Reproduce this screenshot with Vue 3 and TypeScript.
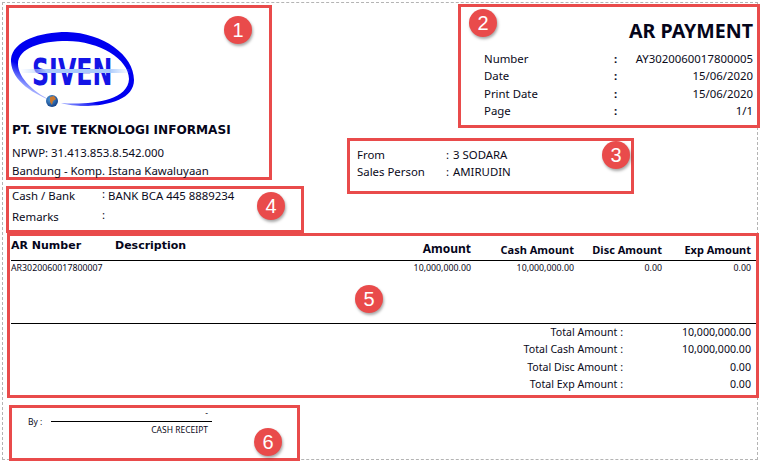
<template>
  <div class="sheet">
    <div class="top">
      <div class="left-col">
        <section class="box company">
          <svg class="logo" width="125" height="80" viewBox="0 0 125 80">
            <defs>
              <linearGradient id="ring" gradientUnits="userSpaceOnUse" x1="50" y1="53" x2="38" y2="77">
                <stop offset="0" stop-color="#0000f0" />
                <stop offset="0.55" stop-color="#7f8cff" />
                <stop offset="1" stop-color="#ffffff" />
              </linearGradient>
              <linearGradient id="shine" x1="0" y1="0" x2="1" y2="0">
                <stop offset="0" stop-color="#b8d4ff" stop-opacity="0" />
                <stop offset="0.25" stop-color="#a9c9fb" />
                <stop offset="0.8" stop-color="#a9c9fb" />
                <stop offset="1" stop-color="#b8d4ff" stop-opacity="0" />
              </linearGradient>
              <radialGradient id="globe" cx="0.4" cy="0.35" r="0.7">
                <stop offset="0" stop-color="#4fa0e0" />
                <stop offset="1" stop-color="#123a80" />
              </radialGradient>
            </defs>
            <path
              fill="url(#ring)"
              fill-rule="evenodd"
              d="M0 27C2 9 28 0 56 0C92 1 123 23 123 48C123 66 100 74 72 74C66 74 56 73 50 71C72 73 117 71 118 47C118 27 88 9 56 9C30 9 7 16 7 32C7 46 24 62 44 70C22 62 -1 48 0 27Z"
            />
            <text class="logo-text" transform="translate(21 53) scale(0.625 1)">SIVEN</text>
            <rect x="9" y="37" width="111" height="4" fill="url(#shine)" />
            <circle cx="41" cy="69" r="6" fill="url(#globe)" />
            <path d="M39 65l4-1 2 3-3 2-1 4-2-3z" fill="#c9772f" />
          </svg>
          <div class="company-name">PT. SIVE TEKNOLOGI INFORMASI</div>
          <div class="company-line npwp">NPWP: 31.413.853.8.542.000</div>
          <div class="company-line">Bandung - Komp. Istana Kawaluyaan</div>
          <span class="badge badge-1">1</span>
        </section>

        <section class="box bank">
          <div class="bank-row">
            <span class="bank-label">Cash / Bank</span><span class="bank-colon">:</span><span>BANK BCA 445 8889234</span>
          </div>
          <div class="bank-row">
            <span class="bank-label">Remarks</span><span class="bank-colon">:</span>
          </div>
          <span class="badge badge-4">4</span>
        </section>
      </div>

      <div class="right-col">
        <section class="box doc">
          <h1>AR PAYMENT</h1>
          <div v-for="row in docRows" :key="row.label" class="doc-row">
            <span>{{ row.label }}</span><span class="doc-colon">:</span><span class="doc-value">{{ row.value }}</span>
          </div>
          <span class="badge badge-2">2</span>
        </section>

        <section class="box party">
          <div v-for="row in partyRows" :key="row.label" class="party-row">
            <span>{{ row.label }}</span><span>:</span><span>{{ row.value }}</span>
          </div>
          <span class="badge badge-3">3</span>
        </section>
      </div>
    </div>

    <section class="box lines">
      <div class="grid-row head">
        <span class="head-no">AR Number</span>
        <span class="head-desc">Description</span>
        <span class="num amount-head">Amount</span>
        <span class="num">Cash Amount</span>
        <span class="num">Disc Amount</span>
        <span class="num">Exp Amount</span>
      </div>
      <div class="grid-row item">
        <span>AR3020060017800007</span>
        <span></span>
        <span class="num">10,000,000.00</span>
        <span class="num">10,000,000.00</span>
        <span class="num">0.00</span>
        <span class="num">0.00</span>
      </div>
      <div class="totals">
        <div v-for="row in totals" :key="row.label" class="total-row">
          <span class="total-label">{{ row.label }} :</span>
          <span class="total-value">{{ row.value }}</span>
        </div>
      </div>
      <span class="badge badge-5">5</span>
    </section>

    <section class="box sign">
      <span class="by">By :</span>
      <div class="sign-block">
        <div class="sign-name">-</div>
        <div class="sign-title">CASH RECEIPT</div>
      </div>
      <span class="badge badge-6">6</span>
    </section>
  </div>
</template>

<script setup lang="ts">
const docRows = [
  { label: 'Number', value: 'AY3020060017800005' },
  { label: 'Date', value: '15/06/2020' },
  { label: 'Print Date', value: '15/06/2020' },
  { label: 'Page', value: '1/1' }
]

const partyRows = [
  { label: 'From', value: '3 SODARA' },
  { label: 'Sales Person', value: 'AMIRUDIN' }
]

const totals = [
  { label: 'Total Amount', value: '10,000,000.00' },
  { label: 'Total Cash Amount', value: '10,000,000.00' },
  { label: 'Total Disc Amount', value: '0.00' },
  { label: 'Total Exp Amount', value: '0.00' }
]
</script>

<style>
html,
body {
  margin: 0;
  background: #fff;
}
</style>

<style scoped>
.sheet {
  position: relative;
  width: 760px;
  height: 461px;
  overflow: hidden;
  box-sizing: border-box;
  padding: 4px 0 0 6px;
  background: #fff;
  color: #0a0a1a;
  font-family: "Noto Sans", "Open Sans", sans-serif;
  font-size: 11.4px;
}

/* dashed page edge of the print preview */
.sheet::before {
  content: "";
  position: absolute;
  left: 2px;
  top: 2px;
  width: 754px;
  height: 456px;
  border: 1px dashed #b4b4b4;
}

.top {
  position: relative;
  display: flex;
}

.left-col {
  width: 298px;
  flex: none;
  padding-top: 1px;
}

.right-col {
  flex: 1;
  display: flex;
  flex-direction: column;
}

.box {
  position: relative;
  box-sizing: border-box;
  border: 3px solid #e94b4b;
}

.company {
  width: 266px;
  height: 175px;
  padding: 24px 0 0 2px;
}

.logo {
  display: block;
}

.logo-text {
  font-family: "DejaVu Sans", sans-serif;
  font-weight: 700;
  font-size: 38px;
  fill: #1414e6;
}

.company-name {
  margin: 11px 0 0 1px;
  font-family: "DejaVu Sans", sans-serif;
  font-weight: 700;
  font-size: 12.1px;
  line-height: 14px;
  color: #05051a;
}

.company-line {
  margin-left: 1px;
  line-height: 18px;
}

.npwp {
  margin-top: 7px;
}

.bank {
  width: 298px;
  height: 47px;
  margin-top: 6px;
  padding: 0 0 0 3px;
}

.bank-row {
  display: flex;
  height: 21px;
  line-height: 13px;
}

.bank-label {
  width: 90px;
}

.bank-colon {
  width: 6px;
  margin-top: -2px;
}

.doc {
  align-self: flex-end;
  width: 302px;
  height: 124px;
  padding: 11px 4px 0 23px;
}

h1 {
  margin: 0 0 7px;
  text-align: right;
  font-size: 19.6px;
  line-height: 25px;
  font-weight: 700;
  color: #05051a;
}

.doc-row {
  display: grid;
  grid-template-columns: 130px 10px 1fr;
  height: 17.3px;
  line-height: 17px;
}

.doc-colon {
  font-weight: 700;
}

.doc-value {
  text-align: right;
}

.party {
  width: 287px;
  height: 56px;
  margin: 10px 0 0 43px;
  padding: 5px 0 0 7px;
}

.party-row {
  display: grid;
  grid-template-columns: 89px 7px 1fr;
  height: 17px;
  line-height: 17px;
}

.lines {
  width: 752px;
  height: 165px;
  margin: 0 0 0 1px;
  padding: 0 0 0 1px;
}

.grid-row {
  display: grid;
  grid-template-columns: 104px 1fr 130px 103px 88px 89px;
  padding-right: 5px;
}

.num {
  text-align: right;
}

.head {
  height: 24px;
  border-bottom: 1px solid #000;
  font-weight: 700;
  font-size: 11px;
  color: #05051a;
  line-height: 23px;
  align-items: start;
}

.head .num {
  padding-top: 2px;
}

.head-no,
.head-desc {
  font-family: "DejaVu Sans", sans-serif;
  font-size: 11px;
  line-height: 19px;
}

.head .amount-head {
  font-size: 12px;
  padding-top: 1px;
}

.item {
  height: 62px;
  border-bottom: 1px solid #000;
  font-size: 8.8px;
  line-height: 15px;
}

.totals {
  padding-top: 1px;
  font-size: 10.6px;
}

.total-row {
  display: grid;
  grid-template-columns: 612px 1fr;
  padding-right: 5px;
  height: 17.3px;
  line-height: 15px;
}

.total-label,
.total-value {
  text-align: right;
}

.sign {
  display: flex;
  width: 291px;
  height: 56px;
  margin: 7px 0 0 3px;
  padding-left: 16px;
  font-size: 8.5px;
}

.by {
  width: 23px;
  margin-top: 8px;
  line-height: 12px;
}

.sign-block {
  width: 161px;
}

.sign-name {
  height: 13px;
  border-bottom: 1px solid #000;
  text-align: right;
  padding-right: 4px;
  line-height: 10px;
}

.sign-title {
  text-align: right;
  padding-right: 4px;
  line-height: 15px;
}

.badge {
  position: absolute;
  width: 28px;
  height: 28px;
  border-radius: 50%;
  background: #e94b4b;
  color: #fff;
  font-family: "Liberation Sans", sans-serif;
  font-size: 20px;
  line-height: 28px;
  text-align: center;
  box-shadow: 1px 2px 3px rgba(0, 0, 0, 0.35);
}

.badge-1 { left: 215px; top: 8px; }
.badge-2 { left: 8px; top: 2px; }
.badge-3 { left: 252px; top: 0px; }
.badge-4 { left: 248px; top: 3px; }
.badge-5 { left: 345px; top: 49px; }
.badge-6 { left: 242px; top: 20px; }
</style>
